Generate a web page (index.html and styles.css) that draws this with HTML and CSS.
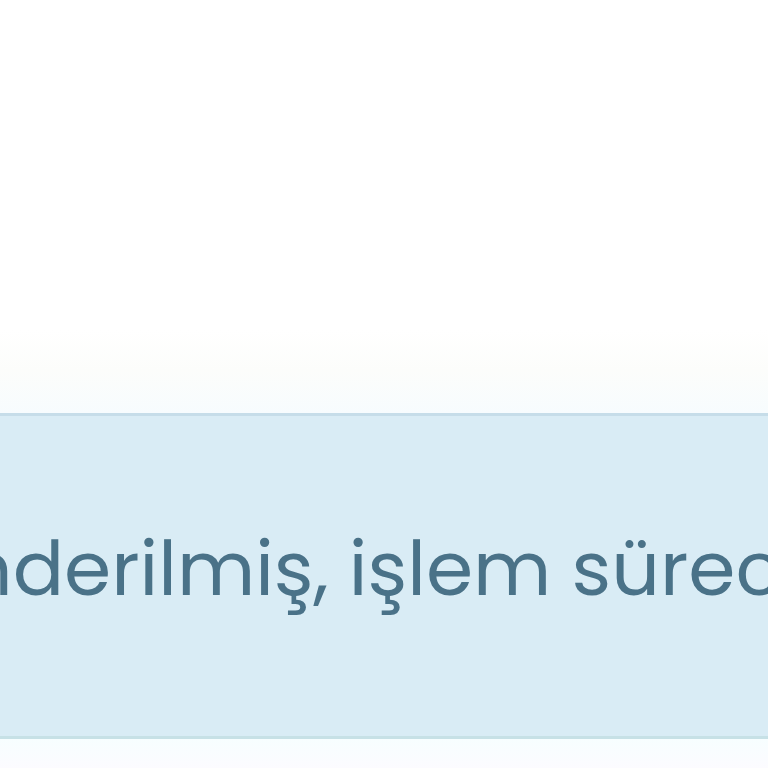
FILE: index.html
```html
<!DOCTYPE html>
<html lang="tr">
<head>
    <meta charset="UTF-8">
    <meta name="viewport" content="width=device-width, initial-scale=1.0">
    <title>Sipariş Durumu</title>
    <link rel="stylesheet" href="styles.css">
</head>
<body>
    <div class="page-top"></div>
    <div class="alert alert-info">
        <p class="alert-text">nderilmiş, işlem süreci devam ediyor</p>
    </div>
    <div class="page-bottom"></div>
</body>
</html>
```

FILE: styles.css
```css
body {
    margin: 0;
    font-family: "Poppins", "DejaVu Sans", sans-serif;
    background: #fff;
}
.page-top {
    height: 413px;
    background: linear-gradient(#ffffff 0, #ffffff 330px, #fcfdfb 370px, #f7fcfe 413px);
}
.alert {
    height: 320px;
    box-sizing: content-box;
    overflow: hidden;
    display: flex;
    align-items: center;
}
.alert-info {
    background-color: #d9ecf5;
    border-top: 3px solid #c6dde9;
    border-bottom: 3px solid #c7e1e6;
}
.alert-text {
    margin: 0 0 14px;
    white-space: nowrap;
    font-size: 76px;
    line-height: 1;
    color: #4a7288;
    text-indent: -36px;
}
.page-bottom {
    height: 30px;
    background: linear-gradient(#f7feff, #fcfbff);
}
```
